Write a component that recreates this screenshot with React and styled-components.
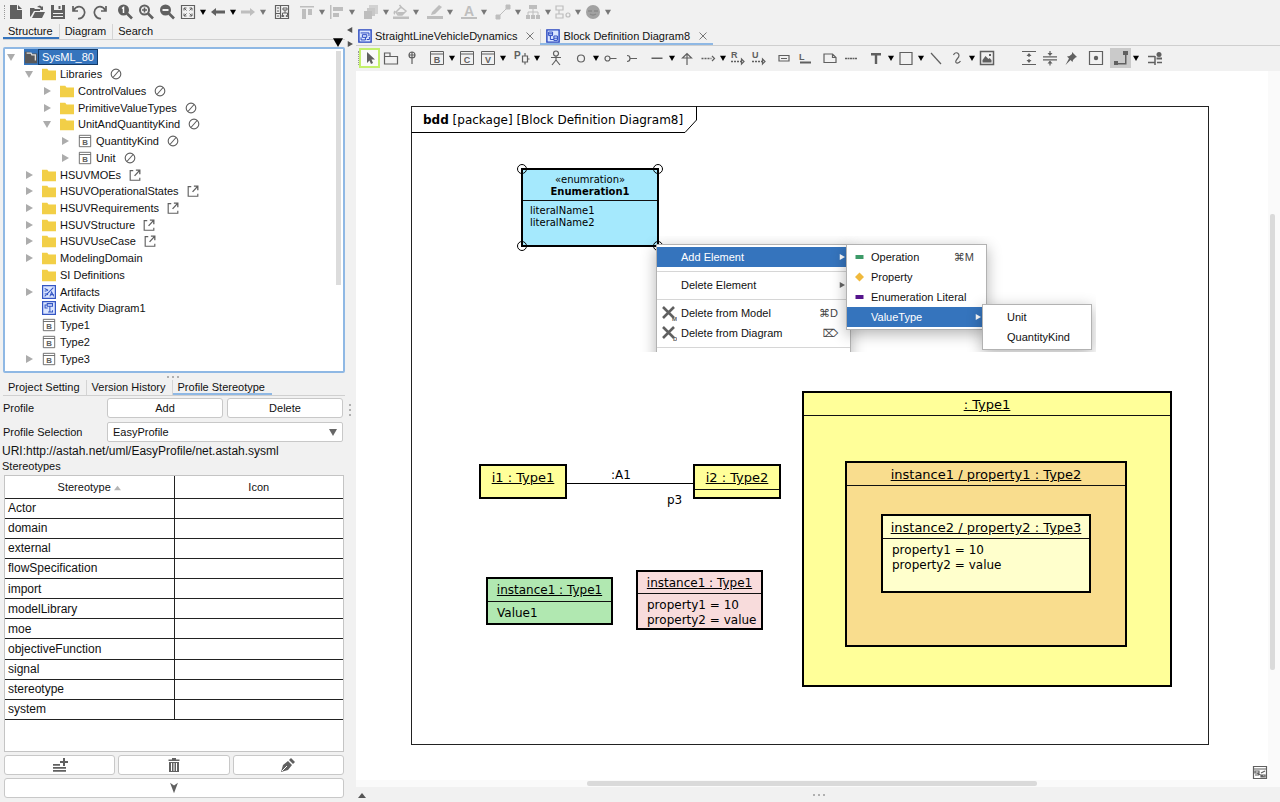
import React from 'react';
import styled, {createGlobalStyle} from "styled-components";


const INK = "#606060"
const ACCENT = "#8fb8e4"
const BLUE = "#3574bd"

const B = (letter) => (
    <>
        <path d="M1.5 1.5h13v13h-13zM1.5 4h13" fill="none" stroke="currentColor"/>
        <text x="8" y="13" fontSize="9" fontWeight="700" textAnchor="middle" fill="currentColor">{letter}</text>
    </>
)

const line = {fill: "none", stroke: "currentColor", strokeWidth: 1.2}
const thick = {fill: "none", stroke: "currentColor", strokeWidth: 2}
const solid = {fill: "currentColor"}

const glyphs = {
    newFile: <path d="M2 1h7v5h5v9H2zM10 1l4 4h-4z" {...solid}/>,
    open: <path d="M1 13V4h4l1 1h5v2H5l-3 5zM3 14l3-6h10l-3 6zM8 3q3-3 5 0l1-1v4h-4l2-1q-1-2-4-2z" {...solid}/>,
    save: (
        <>
            <path d="M1 1h14v14H1z" {...solid}/>
            <path d="M4 1v5h8V1zM3 9h10v1H3zM3 12h10v1H3z" fill="#f0f0f0"/>
            <path d="M8.5 2h2v3h-2z" {...solid}/>
        </>
    ),
    undo: <path d="M2 2v5h5M2.5 6.5Q6 1 11 3.5q4 3 2 7.5-2 4-6 3.5" {...line} strokeWidth="1.7"/>,
    redo: <path d="M14 2v5H9M13.5 6.5Q10 1 5 3.5 1 6.5 3 11q2 4 6 3.5" {...line} strokeWidth="1.7"/>,
    zoomOne: (
        <>
            <circle cx="6.5" cy="6" r="5.5" {...solid}/>
            <path d="M10 9.5l5 5" {...thick} strokeWidth="2.6"/>
            <path d="M5 4.5l1.5-1v5.5" fill="none" stroke="#fff" strokeWidth="1.5"/>
        </>
    ),
    zoomIn: (
        <>
            <circle cx="6.5" cy="6" r="4.5" {...thick}/>
            <path d="M10 9.5l5 5" {...thick} strokeWidth="2.6"/>
            <path d="M4 6h5M6.5 3.5v5" {...line} strokeWidth="1.6"/>
        </>
    ),
    zoomOut: (
        <>
            <circle cx="6.5" cy="6" r="5.5" {...solid}/>
            <path d="M10 9.5l5 5" {...thick} strokeWidth="2.6"/>
            <path d="M3.5 6h6" fill="none" stroke="#fff" strokeWidth="1.8"/>
        </>
    ),
    fit: (
        <>
            <path d="M1.5 1.5h13v13h-13z" {...line}/>
            <path d="M4 6.5V4h2.5M9.5 4H12v2.5M12 9.5V12H9.5M6.5 12H4V9.5M4 4l2.5 2.5M12 4L9.5 6.5M12 12L9.5 9.5M4 12l2.5-2.5" fill="none" stroke="currentColor"/>
        </>
    ),
    back: <path d="M1 8l5-4v2.5h9v3H6V12z" {...solid}/>,
    forward: <path d="M15 8l-5-4v2.5H1v3h9V12z" {...solid}/>,
    map: (
        <>
            <path d="M1.5 1.5h13v13h-13zM6.5 1.5v13M1.5 9.5h5" {...line}/>
            <path d="M3 4h2M3 7h2M3 12h2M9 4h4v2H9zM11 6v3M8.5 11V9h5v2M7.8 11.5h2v1h-2zM12.2 11.5h1.5v1h-1.5z" fill="none" stroke="currentColor"/>
        </>
    ),
    alignTop: <path d="M1 2h14v1.5H1zM3 5h4v10H3zM9 5h4v6H9z" {...solid}/>,
    alignLeft: <path d="M1 1h1.5v14H1zM4 3h10v4H4zM4 9h6v4H4z" {...solid}/>,
    layers: (
        <>
            <path d="M6 1h9v9H6z" {...solid} opacity=".6"/>
            <path d="M3 4h9v9H3z" fill="#f0f0f0"/>
            <path d="M4 4h8v8H4z" {...solid} opacity=".8"/>
            <path d="M1 7h8v8H1z" {...solid}/>
        </>
    ),
    fill: (
        <>
            <path d="M0 12.5h16V15H0z" {...solid}/>
            <path d="M3 8l5-5 5 4-4 4H5zM6.5 1l2.5 3M2 7q-1.5 2.5 0 3" fill="none" stroke="currentColor" strokeWidth="1.5"/>
            <path d="M4 8h8l-3 3H6z" {...solid}/>
        </>
    ),
    pen: <path d="M0 12h16v3H0zM4 11l1-3 7-7 3 2-7 7z" {...solid}/>,
    font: (
        <>
            <path d="M0 13h16v2H0z" {...solid}/>
            <text x="8" y="11.5" fontSize="14" fontWeight="700" textAnchor="middle" fill="currentColor">A</text>
        </>
    ),
    link: <path d="M1 11h4v4H1zM11 1h4v4h-4zM5 11l6-6" fill="currentColor" stroke="currentColor"/>,
    tree: (
        <>
            <path d="M4 1h8v4H4zM1 11h4v4H1zM6 11h4v4H6zM11 11h4v4h-4z" {...solid}/>
            <path d="M8 5v6M3 11V8h10v3" fill="none" stroke="currentColor"/>
        </>
    ),
    mirror: <path d="M1 2h7v4H1zM1 10h7v4H1zM4 6v4M11 11a2 2 0 1 0 4 0 2 2 0 1 0-4 0" {...line}/>,
    ball: (
        <>
            <circle cx="8" cy="8" r="7" fill="#a2a2a2"/>
            <path d="M3 7h4M9 7h4M5 10q3 2 6 0" fill="none" stroke="#8a8a8a" strokeWidth="1.5"/>
        </>
    ),
    cursor: <path d="M5 2v11l2.5-2.5L9 14l2-1-1.5-3.5H13z" {...solid}/>,
    pkg: <path d="M1.5 14V3H7v3.5h7.5V14zM1.5 6.5H7" {...line}/>,
    nail: <path d="M5 5a3 3 0 1 0 6 0 3 3 0 1 0-6 0M8 2v12M5 5h6" {...line}/>,
    blockB: B("B"),
    blockC: B("C"),
    blockV: B("V"),
    port: (
        <>
            <text x="0" y="9" fontSize="10" fontWeight="700" fill="currentColor">P</text>
            <path d="M8.5 6h5v6h-5zM11 3v3M11 12v2.5M13.5 9h2" {...line}/>
        </>
    ),
    actor: <path d="M5.5 3.5a2.5 2.5 0 1 0 5 0 2.5 2.5 0 1 0-5 0M8 6v4M3 7.5h10M8 10l-4 5M8 10l4 5" {...line}/>,
    circle: <circle cx="8" cy="8.5" r="3.5" {...line}/>,
    lollipop: <path d="M2 8.5a2.5 2.5 0 1 0 5 0 2.5 2.5 0 1 0-5 0M7 8.5h6.5" {...line}/>,
    socket: <path d="M3 5.5q3 0 3 3t-3 3M6 8.5h7" {...line}/>,
    dash: <path d="M2.5 7.5h11V9h-11z" {...solid}/>,
    up: <path d="M8 15V4M3.5 8L8 3.5 12.5 8z" {...line}/>,
    dependency: (
        <>
            <path d="M1.5 8.5h10" fill="none" stroke="currentColor" strokeWidth="1.5" strokeDasharray="2 1"/>
            <path d="M12 6l2.5 2.5L12 11" {...line}/>
        </>
    ),
    realize: (
        <>
            <text x="1" y="8" fontSize="9" fontWeight="700" fill="currentColor">R</text>
            <path d="M1 11.5h10" fill="none" stroke="currentColor" strokeWidth="1.5" strokeDasharray="2 1"/>
            <path d="M11.5 9l2.5 2.5-2.5 2.5z" {...line}/>
        </>
    ),
    usage: (
        <>
            <text x="1" y="8" fontSize="9" fontWeight="700" fill="currentColor">U</text>
            <path d="M1 11.5h10" fill="none" stroke="currentColor" strokeWidth="1.5" strokeDasharray="2 1"/>
            <path d="M11.5 9l2.5 2.5-2.5 2.5z" {...line}/>
        </>
    ),
    box: <path d="M3 5.5h10v5.5H3zM5 8.5h6" {...line}/>,
    elbow: (
        <>
            <text x="2" y="10" fontSize="9" fontWeight="700" fill="currentColor">L</text>
            <path d="M3 11.5h11v2H3z" {...solid}/>
        </>
    ),
    note: <path d="M2 4h8.5L14 7.5v5H2zM10.5 4v3.5H14" {...line}/>,
    dots: <path d="M2 8.5h12" fill="none" stroke="currentColor" strokeWidth="1.6" strokeDasharray="2 .5"/>,
    text: <path d="M3 3h10v2.5H9.2V14H6.8V5.5H3z" {...solid}/>,
    rect: <path d="M2 2.5h12v12H2z" {...line}/>,
    slash: <path d="M3 3l10 11" {...line}/>,
    curve: <path d="M4.5 5q1-3 4-2 3 2 0 5.5-3 3.5-1 4.5 2.5.5 4-2" {...line}/>,
    image: (
        <>
            <path d="M1.5 1.5h13v13h-13z" fill="none" stroke="currentColor" strokeWidth="1.5"/>
            <path d="M3.5 12.5V10l3-4 3 3 1-1 2 2v2.5zM10 4h2v2h-2z" {...solid}/>
        </>
    ),
    spread: (
        <>
            <path d="M1 1.5h14M1 14.5h14M8 4v3M8 9v3" {...line}/>
            <path d="M5.5 6L8 3l2.5 3zM5.5 10L8 13l2.5-3z" {...solid}/>
        </>
    ),
    gather: (
        <>
            <path d="M1 6.8h14M1 9.8h14M8 1v3M8 12.5v3" {...line}/>
            <path d="M5.5 3L8 6l2.5-3zM5.5 13.5L8 10.5l2.5 3z" {...solid}/>
        </>
    ),
    thumbtack: <path d="M9 2l5 5-1.5.5-2.5 2.5-.5 2-2-2-5 5 3.5-6.5-2-2 2.5-.5L9 4z" {...solid}/>,
    boxDot: (
        <>
            <path d="M1.5 1.5h13v13h-13z" {...line}/>
            <circle cx="8" cy="8" r="2.2" {...solid}/>
        </>
    ),
    connector: <path d="M1 11h4v4H1zM10 1h5v4h-5zM5 13h7V5h1.5v9.5H5z" {...solid}/>,
    merge: (
        <>
            <path d="M1 6.5h7M1 12.5h7M8 6v9M10 12.5h5" {...line} strokeWidth="1.5"/>
            <circle cx="12" cy="4.5" r="2.5" {...solid}/>
            <path d="M9.5 7.5H15v2H9.5z" {...solid}/>
        </>
    ),
    addRow: <path d="M1 7h7v1.8H1zM1 10h13v1.8H1zM1 13h13v1.8H1zM11 1h2v3h3v2h-3v3h-2V6H8V4h3z" {...solid}/>,
    trash: (
        <>
            <path d="M3 5h10v10H3zM2.5 2.5h11V4h-11zM6 1h4v1.5H6z" {...solid}/>
            <path d="M5.5 6v8M8 6v8M10.5 6v8" stroke="#fff" strokeWidth="1"/>
        </>
    ),
    nib: (
        <>
            <path d="M1 15l2-7 5-4 4 4-4 5zM9 3l2-2 4 4-2 2z" {...solid}/>
            <path d="M2 14l5-5" stroke="#fff"/>
        </>
    ),
    chevron: <path d="M3.5 2L8 5l4.5-3L8 14z" {...solid}/>,
    overview: <path d="M1.5 2.5h13v12h-13zM1.5 5h13M3 9h4V7H3zM9 13h4v-2H9zM3 11h4M9 9l4-2M5 9l7 4" {...line}/>,
    folder: <path d="M0 2h6l1.5 2H16v11H0z" fill="#f2cf47"/>,
    project: (
        <>
            <path d="M1 2h6v2h8v11H1z" fill="#58585a"/>
            <path d="M3 3.5h5l1 2h4V12" fill="none" stroke="#ddd" strokeWidth="1.5"/>
        </>
    ),
    artifacts: (
        <>
            <path d="M.7.7h14.6v14.6H.7z" fill="#dbe6ff" stroke="#3456c4" strokeWidth="1.4"/>
            <path d="M3 13L13 3M3 4l4 2M3 7l4-1M9 13l2-5 2.5 5M9.5 11h4M3 10l4 1" fill="none" stroke="#3456c4" strokeWidth="1.2"/>
        </>
    ),
    activity: (
        <>
            <path d="M.7.7h14.6v14.6H.7z" fill="#dbe6ff" stroke="#3456c4" strokeWidth="1.4"/>
            <path d="M6 3h6v3H6zM6 4.500H3.500V8h3M9 6v6M7 12.500h5v-2M3 8h3" fill="none" stroke="#3456c4" strokeWidth="1.2"/>
        </>
    ),
    parametric: (
        <>
            <path d="M1 1h14v14H1z" fill="#dbe6ff" stroke="#2746c0" strokeWidth="1.6"/>
            <path d="M3 4.500h9.500V8M5 6.500h5v3H5zM3.500 9.500v3h5v-3M10 12h3V9" fill="none" stroke="#2746c0" strokeWidth="1.1"/>
        </>
    ),
    bdd: (
        <>
            <path d="M1 1h14v14H1z" fill="#dbe6ff" stroke="#2746c0" strokeWidth="1.6"/>
            <path d="M3 3.500h4.500v4H3zM3 5.500h4.500M9 8h4v5H9zM9 10.500h4M5 8v4h4" fill="none" stroke="#2746c0" strokeWidth="1.1"/>
        </>
    ),
    readonly: <path d="M2.5 8a5.5 5.5 0 1 0 11 0 5.5 5.5 0 1 0-11 0M4.5 12l7-8" fill="none" stroke="currentColor" strokeWidth="1.3"/>,
    external: (
        <>
            <path d="M6 3H2.5v11h11v-3" {...line} strokeWidth="1.3"/>
            <path d="M9 2.5h4.5V7M13 3L7.5 9" {...line} strokeWidth="1.5"/>
        </>
    ),
    deleteModel: (
        <>
            <path d="M2 2l11 11M13 2L2 13" fill="none" stroke="currentColor" strokeWidth="2.6"/>
            <text x="11" y="16" fontSize="6" fontWeight="700" fill="currentColor">M</text>
        </>
    ),
    deleteDiagram: (
        <>
            <path d="M2 2l11 11M13 2L2 13" fill="none" stroke="currentColor" strokeWidth="2.6"/>
            <text x="12" y="16" fontSize="6" fontWeight="700" fill="currentColor">D</text>
        </>
    ),
    operation: <path d="M4.5 6h8v4h-8z" fill="#3d9a68"/>,
    property: <path d="M8.5 3.5L13 8l-4.5 4.5L4 8z" fill="#f0b93c"/>,
    literal: <path d="M4.5 6h8v4h-8z" fill="#55158c"/>,
}

const Icon = ({name, size = 16}) => (
    <Svg viewBox="0 0 16 16" width={size} height={size} aria-hidden="true">{glyphs[name]}</Svg>
)

const points = {
    down: "0,1 8,1 4,8",
    up: "0,7 8,7 4,2",
    right: "1,0 8,4 1,8",
    left: "7,0 0,4 7,8",
}
const Triangle = ({dir = "down", size = 6, color = "#000"}) => (
    <Svg viewBox="0 0 8 8" width={size} height={size} aria-hidden="true">
        <polygon points={points[dir]} fill={color}/>
    </Svg>
)

const CloseMark = () => (
    <svg viewBox="0 0 8 8" width="8" height="8" aria-hidden="true">
        <path d="M.5.5l7 7M7.5.5l-7 7" stroke="#777" fill="none"/>
    </svg>
)

// "v" draws a drop-down arrow, "|" a small gap, "||" a wide one
// in front of a name: "-" disabled, "+" selected, "*" pressed
const mainTools = [
    "newFile", "open", "save", "undo", "redo", "|", "zoomOne", "zoomIn", "zoomOut", "fit", "v", "back", "v",
    "-forward", "-v", "|", "map", "|", "-alignTop", "-v", "-alignLeft", "-v", "|", "-layers", "-v", "-fill", "-v", "|",
    "-pen", "-v", "|", "-font", "-v", "|", "-link", "-v", "-tree", "-v", "-mirror", "-v", "-ball", "-v",
]
const diagramTools = [
    "+cursor", "pkg", "nail", "|", "blockB", "v", "blockC", "blockV", "v", "|", "port", "v", "|", "actor", "|",
    "circle", "v", "lollipop", "socket", "|", "dash", "v", "up", "dependency", "v", "realize", "usage", "|",
    "box", "elbow", "|", "note", "dots", "|", "text", "v", "rect", "v", "slash", "curve", "v", "image", "||",
    "spread", "gather", "thumbtack", "|", "boxDot", "|", "*connector", "v", "|", "merge",
]

const Tools = ({items}) => items.map((item, i) => {
    const flag = "-+*".includes(item[0]) ? item[0] : ""
    const name = flag ? item.slice(1) : item
    if (name === "|" || name === "||") return <ToolGap key={i} $wide={name === "||"}/>
    if (name === "v") {
        return (
            <DropBtn key={i} aria-label="more" disabled={flag === "-"}>
                <Triangle color={flag === "-" ? "#777" : "#000"}/>
            </DropBtn>
        )
    }
    return (
        <ToolBtn key={i} aria-label={name} disabled={flag === "-"} $active={flag === "+"} $pressed={flag === "*"}>
            <Icon name={name}/>
        </ToolBtn>
    )
})

const treeRows = [
    {level: 0, icon: "project", text: "SysML_80", arrow: "down", selected: true},
    {level: 1, icon: "folder", text: "Libraries", arrow: "down", mark: "readonly"},
    {level: 2, icon: "folder", text: "ControlValues", arrow: "right", mark: "readonly"},
    {level: 2, icon: "folder", text: "PrimitiveValueTypes", arrow: "right", mark: "readonly"},
    {level: 2, icon: "folder", text: "UnitAndQuantityKind", arrow: "down", mark: "readonly"},
    {level: 3, icon: "blockB", text: "QuantityKind", arrow: "right", mark: "readonly"},
    {level: 3, icon: "blockB", text: "Unit", arrow: "right", mark: "readonly"},
    {level: 1, icon: "folder", text: "HSUVMOEs", arrow: "right", mark: "external"},
    {level: 1, icon: "folder", text: "HSUVOperationalStates", arrow: "right", mark: "external"},
    {level: 1, icon: "folder", text: "HSUVRequirements", arrow: "right", mark: "external"},
    {level: 1, icon: "folder", text: "HSUVStructure", arrow: "right", mark: "external"},
    {level: 1, icon: "folder", text: "HSUVUseCase", arrow: "right", mark: "external"},
    {level: 1, icon: "folder", text: "ModelingDomain", arrow: "right"},
    {level: 1, icon: "folder", text: "SI Definitions"},
    {level: 1, icon: "artifacts", text: "Artifacts", arrow: "right"},
    {level: 1, icon: "activity", text: "Activity Diagram1"},
    {level: 1, icon: "blockB", text: "Type1"},
    {level: 1, icon: "blockB", text: "Type2"},
    {level: 1, icon: "blockB", text: "Type3", arrow: "right"},
]

const stereotypes = [
    "Actor", "domain", "external", "flowSpecification", "import", "modelLibrary",
    "moe", "objectiveFunction", "signal", "stereotype", "system",
]

const MenuRow = ({icon, text, shortcut, sub, active}) => (
    <MenuItem role="menuitem" $active={active}>
        <MenuIcon>{icon && <Icon name={icon}/>}</MenuIcon>
        <MenuText>{text}</MenuText>
        {shortcut && <Shortcut>{shortcut}</Shortcut>}
        {sub && <Triangle dir="right" color={active ? "#fff" : "#666"}/>}
    </MenuItem>
)

const SidePanel = () => (
    <Side>
        <TabBar>
            <SideTab $active $color={BLUE}>Structure</SideTab>
            <SideTab>Diagram</SideTab>
            <SideTab>Search</SideTab>
        </TabBar>
        <PanelMenu><Triangle size={10}/></PanelMenu>
        <TreeBox>
            <TreeList>
                {treeRows.map((row) => (
                    <TreeRow key={row.text} $level={row.level}>
                        <TreeArrow>{row.arrow && <Triangle dir={row.arrow} size={8} color="#acacac"/>}</TreeArrow>
                        <TreeLabel $selected={row.selected}>
                            <Icon name={row.icon} size={14}/>
                            <TreeText $selected={row.selected}>{row.text}</TreeText>
                        </TreeLabel>
                        {row.mark && <Icon name={row.mark} size={14}/>}
                    </TreeRow>
                ))}
            </TreeList>
            <TreeScroll/>
        </TreeBox>
        <Grip><i/><i/><i/></Grip>
        <TabBar>
            <SideTab>Project Setting</SideTab>
            <SideTab>Version History</SideTab>
            <SideTab $active $color={ACCENT}>Profile Stereotype</SideTab>
        </TabBar>
        <Form>
            <span>Profile</span>
            <PushBtn>Add</PushBtn>
            <PushBtn>Delete</PushBtn>
            <label htmlFor="profile">Profile Selection</label>
            <SelectWrap>
                <Select id="profile"><option>EasyProfile</option></Select>
                <SelectArrow><Triangle size={8} color="#666"/></SelectArrow>
            </SelectWrap>
        </Form>
        <Uri>URI:http://astah.net/uml/EasyProfile/net.astah.sysml</Uri>
        <Caption>Stereotypes</Caption>
        <TableBox>
            <Table>
                <thead>
                    <tr>
                        <th>Stereotype <Triangle dir="up" size={7} color="#b5b5b5"/></th>
                        <th>Icon</th>
                    </tr>
                </thead>
                <tbody>
                    {stereotypes.map((name) => <tr key={name}><td>{name}</td><td/></tr>)}
                </tbody>
            </Table>
        </TableBox>
        <BtnRow>
            <PushBtn aria-label="add stereotype"><Icon name="addRow"/></PushBtn>
            <PushBtn aria-label="delete stereotype"><Icon name="trash"/></PushBtn>
            <PushBtn aria-label="edit stereotype"><Icon name="nib"/></PushBtn>
        </BtnRow>
        <BtnRow>
            <PushBtn aria-label="collapse"><Icon name="chevron" size={14}/></PushBtn>
        </BtnRow>
    </Side>
)

const Diagram = () => (
    <Canvas>
        <Frame $x={55} $y={35} $w={798} $h={639}/>
        <FrameTitle>
            <svg width="286" height="27" aria-hidden="true">
                <path d="M.5 26.5H274L285.5 14V.5" fill="none" stroke="#000"/>
            </svg>
            <FrameText><b>bdd</b> [package] [Block Definition Diagram8]</FrameText>
        </FrameTitle>

        <Node $x={165} $y={97} $w={138} $h={79} $fill="#a5e9fd" $small>
            <NodeHead $h={31} $plain>«enumration»<br/><b>Enumeration1</b></NodeHead>
            <NodeBody $tight>literalName1<br/>literalName2</NodeBody>
        </Node>
        <Handle $x={166} $y={98}/>
        <Handle $x={302} $y={98}/>
        <Handle $x={166} $y={175}/>
        <Handle $x={302} $y={175}/>

        <Node $x={123} $y={393} $w={88} $h={35} $fill="#ffff99">
            <NodeHead $h={24} $large $open>i1 : Type1</NodeHead>
        </Node>
        <Node $x={337} $y={393} $w={88} $h={35} $fill="#ffff99">
            <NodeHead $h={24} $large>i2 : Type2</NodeHead>
        </Node>
        <Wire/>
        <WireText $x={255} $y={397}>:A1</WireText>
        <WireText $x={311} $y={422}>p3</WireText>

        <Node $x={130} $y={506} $w={127} $h={48} $fill="#b1e8b1">
            <NodeHead $h={23}>instance1 : Type1</NodeHead>
            <NodeBody>Value1</NodeBody>
        </Node>
        <Node $x={280} $y={499} $w={127} $h={60} $fill="#f8dcdc">
            <NodeHead $h={22}>instance1 : Type1</NodeHead>
            <NodeBody>property1 = 10<br/>property2 = value</NodeBody>
        </Node>

        <Node $x={446} $y={320} $w={370} $h={296} $fill="#ffff99">
            <NodeHead $h={23} $large>: Type1</NodeHead>
        </Node>
        <Node $x={489} $y={390} $w={282} $h={186} $fill="#f9dd8e">
            <NodeHead $h={23} $large>instance1 / property1 : Type2</NodeHead>
        </Node>
        <Node $x={525} $y={443} $w={210} $h={79} $fill="#ffffcc">
            <NodeHead $h={23} $large>instance2 / property2 : Type3</NodeHead>
            <NodeBody>property1 = 10<br/>property2 = value</NodeBody>
        </Node>

        <MenuLayer>
            <Menu role="menu" $x={16} $y={8} $w={195} $open>
                <MenuRow text="Add Element" sub active/>
                <MenuLine/>
                <MenuRow text="Delete Element" sub/>
                <MenuLine/>
                <MenuRow icon="deleteModel" text="Delete from Model" shortcut="⌘D"/>
                <MenuRow icon="deleteDiagram" text="Delete from Diagram" shortcut="⌦"/>
                <MenuLine/>
            </Menu>
            <Menu role="menu" $x={206} $y={8} $w={141}>
                <MenuRow icon="operation" text="Operation" shortcut="⌘M"/>
                <MenuRow icon="property" text="Property"/>
                <MenuRow icon="literal" text="Enumeration Literal"/>
                <MenuRow text="ValueType" sub active/>
            </Menu>
            <Menu role="menu" $x={342} $y={68} $w={110}>
                <MenuRow text="Unit"/>
                <MenuRow text="QuantityKind"/>
            </Menu>
        </MenuLayer>
        <Overview><Icon name="overview"/></Overview>
    </Canvas>
)

const App = () => {
    return (
        <>
            <GlobalStyle/>
            <Window>
                <ToolBar $h={24}>
                    <ToolGrip/>
                    <Tools items={mainTools}/>
                </ToolBar>
                <Main>
                    <SidePanel/>
                    <Splitter>
                        <Triangle dir="left" color="#555"/>
                        <Triangle dir="right" color="#555"/>
                        <SplitGrip><i/><i/><i/></SplitGrip>
                    </Splitter>
                    <Editor>
                        <EditorTabs>
                            <EditorTab>
                                <Icon name="parametric" size={14}/>StraightLineVehicleDynamics
                                <CloseBtn aria-label="close"><CloseMark/></CloseBtn>
                            </EditorTab>
                            <EditorTab $active>
                                <Icon name="bdd" size={14}/>Block Definition Diagram8
                                <CloseBtn aria-label="close"><CloseMark/></CloseBtn>
                            </EditorTab>
                        </EditorTabs>
                        <ToolBar $h={25}>
                            <ToolGrip $narrow/>
                            <Tools items={diagramTools}/>
                        </ToolBar>
                        <CanvasRow>
                            <Diagram/>
                            <VScroll><i/></VScroll>
                        </CanvasRow>
                        <HScroll><i/></HScroll>
                        <Bottom>
                            <Triangle dir="up" size={8} color="#555"/>
                            <Grip><i/><i/><i/></Grip>
                            <span/>
                        </Bottom>
                    </Editor>
                </Main>
            </Window>
        </>
    );
};


const GlobalStyle = createGlobalStyle`
  * {
    box-sizing: border-box;
  }
  body {
    margin: 0;
    background: #f1f1f1;
    color: #111;
    font-family: "Liberation Sans", Arial, sans-serif;
    font-size: 11px;
  }
  button, select {
    font: inherit;
    color: inherit;
  }
`
const Svg = styled.svg`
  flex: none;
  display: block;
`
const Window = styled.div`
  display: flex;
  flex-direction: column;
  height: 100vh;
  overflow: hidden;
`
const ToolBar = styled.div`
  display: flex;
  align-items: flex-start;
  flex: none;
  height: ${(props) => props.$h}px;
  padding-top: 2px;
  color: ${INK};
`
const ToolGrip = styled.span`
  width: ${(props) => props.$narrow ? "3px" : "5px"};
  height: 14px;
  margin-top: 3px;
  flex: none;
  border-right: 1px dotted #999;
`
const ToolBtn = styled.button`
  display: flex;
  align-items: center;
  justify-content: center;
  flex: none;
  width: 21px;
  height: 20px;
  padding: 0;
  border: 1px solid transparent;
  background: ${(props) => props.$pressed ? "#cacaca" : "none"};
  ${(props) => props.$active && "border: 2px solid #c3f06c; background: #fafafa;"}
  &:disabled {
    color: #bebebe;
  }
`
const DropBtn = styled.button`
  display: flex;
  align-items: center;
  justify-content: center;
  flex: none;
  width: 9px;
  height: 20px;
  padding: 0;
  border: none;
  background: none;
`
const ToolGap = styled.span`
  flex: none;
  width: ${(props) => props.$wide ? "21px" : "4px"};
`
const Main = styled.div`
  display: flex;
  flex: 1;
  min-height: 0;
`
const Side = styled.div`
  display: flex;
  flex-direction: column;
  flex: none;
  width: 345px;
  padding-bottom: 4px;
`
const TabBar = styled.div`
  display: flex;
  flex: none;
  height: 16px;
  margin-left: 3px;
  border-bottom: 1px solid #d0d0d0;
`
const SideTab = styled.button`
  height: 15px;
  padding: 0 7px 0 5px;
  border: none;
  border-bottom: 2px solid ${(props) => props.$active ? props.$color : "transparent"};
  background: none;
  line-height: 12px;
  white-space: nowrap;
  & + & {
    box-shadow: -1px 0 0 #d4d4d4;
  }
`
const PanelMenu = styled.div`
  display: flex;
  flex: none;
  justify-content: flex-end;
  align-items: flex-end;
  height: 7px;
  padding-right: 2px;
`
const TreeBox = styled.div`
  display: flex;
  flex: none;
  height: 326px;
  margin-left: 3px;
  border: 2px solid ${ACCENT};
  border-radius: 2px;
  background: #fff;
  overflow: hidden;
`
const TreeList = styled.div`
  display: grid;
  grid-auto-rows: 1fr;
  flex: 1;
  height: 318px;
`
const TreeRow = styled.div`
  display: flex;
  align-items: center;
  gap: 3px;
  padding-left: ${(props) => 2 + props.$level * 18}px;
  white-space: nowrap;
  color: ${INK};
`
const TreeArrow = styled.span`
  width: 14px;
  flex: none;
`
const TreeLabel = styled.span`
  display: flex;
  align-items: center;
  ${(props) => props.$selected && `background: ${BLUE};`}
`
const TreeText = styled.span`
  padding: 0 3px;
  border: 1px solid ${(props) => props.$selected ? "#123a68" : "transparent"};
  color: ${(props) => props.$selected ? "#fff" : "#111"};
  line-height: 14px;
`
const TreeScroll = styled.div`
  width: 5px;
  height: 234px;
  margin: 2px 2px 0 0;
  background: #dcdcdc;
`
const Grip = styled.div`
  display: flex;
  flex: none;
  justify-content: center;
  align-items: center;
  gap: 3px;
  height: 7px;
  i {
    width: 2px;
    height: 2px;
    background: #b0b0b0;
  }
`
const Form = styled.div`
  display: grid;
  grid-template-columns: 100px 1fr 1fr;
  align-items: center;
  gap: 4px;
  flex: none;
  padding: 2px 2px 0 3px;
`
const PushBtn = styled.button`
  display: flex;
  align-items: center;
  justify-content: center;
  flex: 1;
  height: 20px;
  padding: 0;
  border: 1px solid #c8c8c8;
  border-radius: 3px;
  background: #fff;
  svg {
    color: ${INK};
  }
`
const SelectWrap = styled.div`
  position: relative;
  grid-column: span 2;
`
const Select = styled.select`
  display: block;
  width: 100%;
  height: 20px;
  padding: 0 5px;
  border: 1px solid #c8c8c8;
  border-radius: 2px;
  background: #fff;
  appearance: none;
`
const SelectArrow = styled.span`
  position: absolute;
  right: 6px;
  top: 6px;
  pointer-events: none;
`
const Uri = styled.div`
  flex: none;
  margin-top: 1px;
  padding-left: 2px;
  font-size: 12px;
  line-height: 16px;
`
const Caption = styled.div`
  flex: none;
  padding-left: 2px;
  line-height: 14px;
`
const TableBox = styled.div`
  flex: 1;
  min-height: 0;
  margin: 2px 1px 0 4px;
  border: 1px solid #c4c4c4;
  background: #fff;
  overflow: hidden;
`
const Table = styled.table`
  width: 100%;
  height: 244px;
  border-collapse: collapse;
  table-layout: fixed;
  th, td {
    height: 20px;
    padding: 0 3px;
    border-bottom: 1px solid #222;
    font-size: 12px;
    font-weight: 400;
    text-align: left;
  }
  th {
    height: 22px;
    font-size: 11px;
    text-align: center;
  }
  th svg {
    display: inline;
  }
  th + th, td + td {
    border-left: 1px solid #222;
  }
`
const BtnRow = styled.div`
  display: flex;
  flex: none;
  gap: 3px;
  margin: 3px 1px 0 4px;
`
const Splitter = styled.div`
  display: flex;
  flex-direction: column;
  flex: none;
  gap: 8px;
  width: 11px;
  padding: 3px 0 0 2px;
`
const SplitGrip = styled.div`
  display: flex;
  flex-direction: column;
  gap: 3px;
  margin-top: 349px;
  padding-left: 2px;
  i {
    width: 2px;
    height: 2px;
    background: #b0b0b0;
  }
`
const Editor = styled.div`
  display: flex;
  flex-direction: column;
  flex: 1;
  min-width: 0;
`
const EditorTabs = styled.div`
  display: flex;
  flex: none;
  height: 22px;
  padding: 5px 0 0 2px;
  border-bottom: 1px solid #cfcfcf;
`
const EditorTab = styled.div`
  display: flex;
  align-items: center;
  gap: 3px;
  padding: 0 6px 0 0;
  border-bottom: 2px solid ${(props) => props.$active ? ACCENT : "transparent"};
  & + & {
    padding-left: 6px;
    box-shadow: inset 1px 0 0 #d4d4d4;
  }
`
const CloseBtn = styled.button`
  display: flex;
  margin-left: 6px;
  padding: 0;
  border: none;
  background: none;
`
const CanvasRow = styled.div`
  display: flex;
  flex: 1;
  min-height: 0;
`
const Canvas = styled.div`
  position: relative;
  flex: 1;
  background: #fff;
  overflow: hidden;
  font-family: "DejaVu Sans", "Lucida Grande", sans-serif;
  font-size: 12px;
  color: #000;
`
const Frame = styled.div`
  position: absolute;
  left: ${(props) => props.$x}px;
  top: ${(props) => props.$y}px;
  width: ${(props) => props.$w}px;
  height: ${(props) => props.$h}px;
  border: 1px solid #222;
`
const FrameTitle = styled.div`
  position: absolute;
  left: 55px;
  top: 35px;
`
const FrameText = styled.span`
  position: absolute;
  left: 12px;
  top: 7px;
  white-space: nowrap;
`
const Node = styled(Frame)`
  border: 2px solid #000;
  background: ${(props) => props.$fill};
  font-size: ${(props) => props.$small ? "10px" : "12px"};
  line-height: ${(props) => props.$small ? "12px" : "15px"};
`
const NodeHead = styled.div`
  height: ${(props) => props.$h}px;
  padding-top: 4px;
  border-bottom: ${(props) => props.$open ? "none" : "1px solid #111"};
  ${(props) => props.$large && "font-size: 13px;"}
  text-align: center;
  text-decoration: ${(props) => props.$plain ? "none" : "underline"};
  white-space: nowrap;
`
const NodeBody = styled.div`
  padding: 4px ${(props) => props.$tight ? "7px" : "9px"};
  white-space: nowrap;
`
const Handle = styled.span`
  position: absolute;
  left: ${(props) => props.$x - 5}px;
  top: ${(props) => props.$y - 5}px;
  width: 10px;
  height: 10px;
  border: 1px solid #000;
  border-radius: 50%;
`
const Wire = styled.div`
  position: absolute;
  left: 211px;
  top: 412px;
  width: 126px;
  height: 1px;
  background: #000;
`
const WireText = styled.span`
  position: absolute;
  left: ${(props) => props.$x}px;
  top: ${(props) => props.$y}px;
  line-height: 15px;
`
const MenuLayer = styled.div`
  position: absolute;
  left: 284px;
  top: 165px;
  width: 456px;
  height: 116px;
  overflow: hidden;
  font-family: "Liberation Sans", Arial, "DejaVu Sans", sans-serif;
  font-size: 11px;
`
const Menu = styled.div`
  position: absolute;
  left: ${(props) => props.$x}px;
  top: ${(props) => props.$y}px;
  width: ${(props) => props.$w}px;
  padding: 2px 0;
  ${(props) => props.$open && "padding-bottom: 20px;"}
  border: 1px solid #b2b2b2;
  background: #fff;
  box-shadow: 0 4px 14px rgba(0, 0, 0, 0.3);
`
const MenuItem = styled.div`
  display: flex;
  align-items: center;
  height: 20px;
  padding: 0 5px 0 4px;
  background: ${(props) => props.$active ? BLUE : "none"};
  color: ${(props) => props.$active ? "#fff" : "#111"};
`
const MenuIcon = styled.span`
  width: 20px;
  flex: none;
  color: ${INK};
`
const MenuText = styled.span`
  flex: 1;
  white-space: nowrap;
`
const Shortcut = styled.span`
  padding-right: 7px;
  color: #444;
`
const MenuLine = styled.div`
  height: 1px;
  margin: 4px 0 3px;
  background: #d6d6d6;
`
const Overview = styled.div`
  position: absolute;
  right: 0;
  bottom: 0;
  color: ${INK};
`
const VScroll = styled.div`
  flex: none;
  width: 12px;
  padding: 143px 5px 0 2px;
  background: #fafafa;
  i {
    display: block;
    height: 456px;
    border-radius: 2px;
    background: #dadada;
  }
`
const HScroll = styled.div`
  flex: none;
  height: 7px;
  padding-left: 25%;
  background: #fafafa;
  i {
    display: block;
    width: 65%;
    height: 5px;
    margin-top: 1px;
    border-radius: 2px;
    background: #dadada;
  }
`
const Bottom = styled.div`
  display: flex;
  flex: none;
  justify-content: space-between;
  align-items: center;
  height: 15px;
  padding: 0 8px 0 2px;
`

export default App;
